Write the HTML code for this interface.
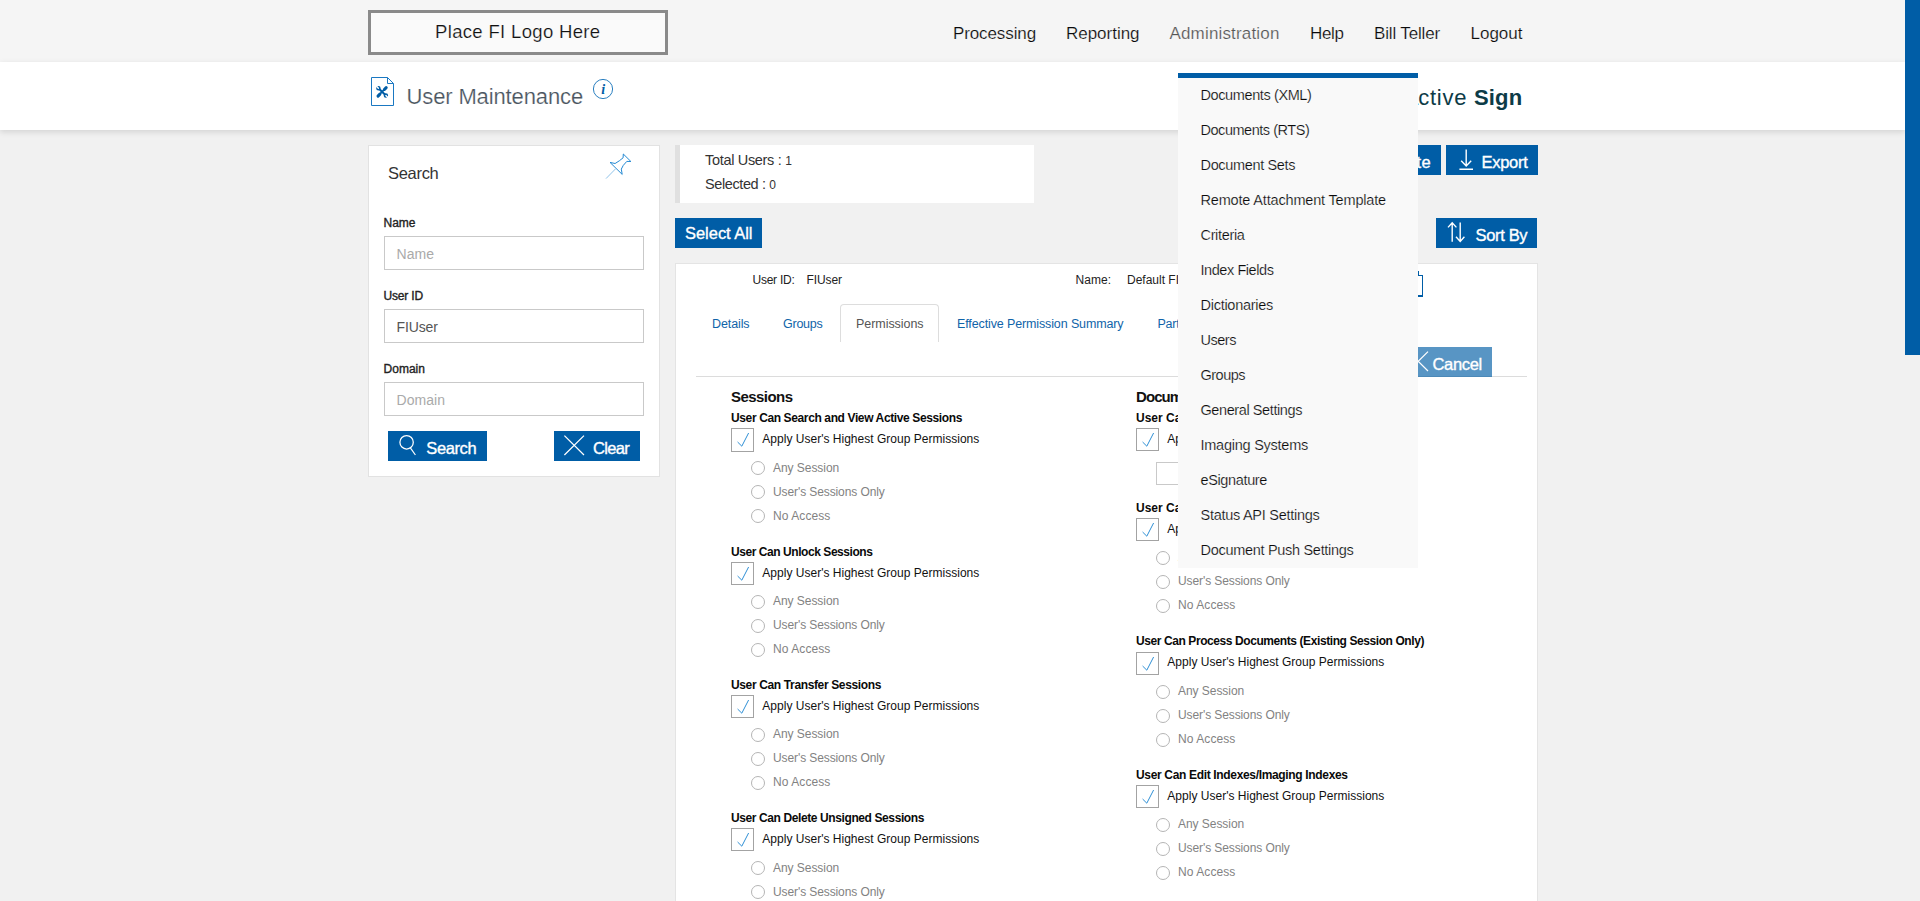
<!DOCTYPE html>
<html lang="en">
<head>
<meta charset="utf-8">
<title>User Maintenance</title>
<style>
html,body{margin:0;padding:0}
body{width:1920px;height:901px;overflow:hidden;position:relative;background:#f1f1f1;font-family:"Liberation Sans", sans-serif;color:#222}
.b{position:absolute;display:block;margin:0;padding:0;box-sizing:border-box}
.t{position:absolute;display:block;margin:0;padding:0;line-height:1;white-space:nowrap;font-weight:400;text-decoration:none;list-style:none}
h1.t,h2.t{font-weight:400}
b{font-weight:700}
small{font-size:12px}
nav,section{display:contents}
.logo{border:3px solid #8a8a8a;background:#fafafa;box-sizing:border-box}
.titlebar{background:#fff;box-shadow:0 2px 6px rgba(0,0,0,.13)}
.panel{background:#fff;box-shadow:inset 0 0 0 1px #e2e2e2}
.input{background:#fff;border:1px solid #c9c9c9}
.btn{background:#005da6;border:0;font-family:inherit;cursor:pointer;overflow:visible}
.btn.dis{opacity:.65}
.stats{background:#fff;border-left:5px solid #e0e0e0}
.card{background:#fff;box-shadow:inset 0 0 0 1px #e4e4e4;overflow:hidden}
.chk{border:1px solid #a3a3a3;background:#fff}
.chk svg{position:absolute;left:-1px;top:-1px}
.radio{border:1px solid #b5b5b5;border-radius:50%;background:#fff}
.menu{background:#f9f9f9;border-top:5px solid #005da6;list-style:none;overflow:hidden}
#t1{letter-spacing:0.339px}
#t2{letter-spacing:-0.111px}
#t3{letter-spacing:-0.024px}
#t4{letter-spacing:0.163px}
#t5{letter-spacing:-0.367px}
#t6{letter-spacing:-0.156px}
#t7{letter-spacing:0.000px}
#t8{letter-spacing:-0.128px}
#t10{letter-spacing:0.730px}
#t11{letter-spacing:0.157px}
#t12{letter-spacing:-0.297px}
#t13{letter-spacing:-0.004px}
#t14{letter-spacing:0.035px}
#t15{letter-spacing:-0.167px}
#t16{letter-spacing:-0.117px}
#t17{letter-spacing:0.023px}
#t18{letter-spacing:0.042px}
#t19{letter-spacing:-0.397px}
#t20{letter-spacing:-0.647px}
#t21{letter-spacing:-0.320px}
#t22{letter-spacing:-0.392px}
#t23{letter-spacing:-0.037px}
#t24{letter-spacing:0.383px}
#t25{letter-spacing:-0.281px}
#t26{letter-spacing:-0.330px}
#t27{letter-spacing:-0.252px}
#t28{letter-spacing:-0.083px}
#t29{letter-spacing:0.031px}
#t31{letter-spacing:-0.103px}
#t32{letter-spacing:-0.250px}
#t33{letter-spacing:-0.053px}
#t34{letter-spacing:-0.124px}
#t35{letter-spacing:-0.234px}
#t37{letter-spacing:-0.346px}
#t38{letter-spacing:-0.547px}
#t39{letter-spacing:-0.378px}
#t40{letter-spacing:0.016px}
#t41{letter-spacing:-0.046px}
#t42{letter-spacing:-0.099px}
#t43{letter-spacing:0.077px}
#t44{letter-spacing:-0.440px}
#t45{letter-spacing:0.016px}
#t46{letter-spacing:-0.046px}
#t47{letter-spacing:-0.099px}
#t48{letter-spacing:0.077px}
#t49{letter-spacing:-0.362px}
#t50{letter-spacing:0.016px}
#t51{letter-spacing:-0.046px}
#t52{letter-spacing:-0.099px}
#t53{letter-spacing:0.077px}
#t54{letter-spacing:-0.396px}
#t55{letter-spacing:0.016px}
#t56{letter-spacing:-0.046px}
#t57{letter-spacing:-0.099px}
#t58{letter-spacing:0.077px}
#t59{letter-spacing:-0.910px}
#t61{letter-spacing:0.016px}
#t63{letter-spacing:0.016px}
#t64{letter-spacing:-0.046px}
#t65{letter-spacing:-0.099px}
#t66{letter-spacing:0.077px}
#t67{letter-spacing:-0.415px}
#t68{letter-spacing:0.016px}
#t69{letter-spacing:-0.046px}
#t70{letter-spacing:-0.099px}
#t71{letter-spacing:0.077px}
#t72{letter-spacing:-0.335px}
#t73{letter-spacing:0.016px}
#t74{letter-spacing:-0.046px}
#t75{letter-spacing:-0.099px}
#t76{letter-spacing:0.077px}
#t77{letter-spacing:-0.390px}
#t78{letter-spacing:-0.464px}
#t79{letter-spacing:-0.342px}
#t80{letter-spacing:-0.171px}
#t81{letter-spacing:-0.342px}
#t82{letter-spacing:-0.432px}
#t83{letter-spacing:-0.271px}
#t84{letter-spacing:-0.475px}
#t85{letter-spacing:-0.510px}
#t86{letter-spacing:-0.407px}
#t87{letter-spacing:-0.248px}
#t88{letter-spacing:-0.364px}
#t89{letter-spacing:-0.271px}
#t90{letter-spacing:-0.300px}
</style>
</head>
<body>
<header class="b" style="left:0px;top:0px;width:1905px;height:62px;background:#f5f5f5;"><div class="logo b" style="left:368px;top:10px;width:300px;height:45px;"><span id="t1" class="t" style="left:64.00px;top:10px;font-size:18.5px;-webkit-text-stroke:.2px #fafafa;color:#111;">Place FI Logo Here</span></div><nav><a id="t2" class="t" style="left:953.00px;top:25px;font-size:17px;-webkit-text-stroke:.2px #f5f5f5;color:#0a0a0a;">Processing</a><a id="t3" class="t" style="left:1066.00px;top:25px;font-size:17px;-webkit-text-stroke:.2px #f5f5f5;color:#0a0a0a;">Reporting</a><a id="t4" class="t" style="left:1169.50px;top:25px;font-size:17px;-webkit-text-stroke:.2px #f5f5f5;color:#555;">Administration</a><a id="t5" class="t" style="left:1310.00px;top:25px;font-size:17px;-webkit-text-stroke:.2px #f5f5f5;color:#0a0a0a;">Help</a><a id="t6" class="t" style="left:1374.00px;top:25px;font-size:17px;-webkit-text-stroke:.2px #f5f5f5;color:#0a0a0a;">Bill Teller</a><a id="t7" class="t" style="left:1470.50px;top:25px;font-size:17px;-webkit-text-stroke:.2px #f5f5f5;color:#0a0a0a;">Logout</a></nav></header>
<div class="b titlebar" style="left:0px;top:62px;width:1905px;height:68px;"><svg class="b" style="left:368px;top:13px" width="30" height="34" viewBox="0 0 30 34"><path d="M3.5 2.5 H19.5 L25.5 8.5 V30.5 H3.5 Z" fill="#fff" stroke="#1a78c2" stroke-width="1"/><path d="M19.5 2.5 V8.5 H25.5" fill="none" stroke="#1a78c2" stroke-width="1"/><g stroke="#005da6" fill="none"><path d="M11 13.8 L17.4 20" stroke-width="2.1"/><circle cx="10.4" cy="13.2" r="1.5" stroke-width="1.5"/><circle cx="17.9" cy="20.5" r="1.5" stroke-width="1.5"/><path d="M16.6 14.2 L11.6 19.4" stroke-width="1.7"/><path d="M18.2 12.6 L16.4 14.5 M10 21.1 L11.9 19.1" stroke-width="3" stroke-linecap="round"/></g><path d="M10.2 13 L8 10.8 M18.1 20.7 L20.4 23" stroke="#fff" stroke-width="1.3"/></svg><h1 id="t8" class="t" style="left:406.50px;top:24px;font-size:22px;-webkit-text-stroke:.2px #fff;color:#4a5560;">User Maintenance</h1><svg class="b" style="left:591px;top:15px" width="24" height="24" viewBox="0 0 24 24"><circle cx="12" cy="12" r="9.6" fill="#fff" stroke="#2a7fc0" stroke-width="1"/><text x="12.3" y="17" text-anchor="middle" font-family="Liberation Serif, serif" font-style="italic" font-weight="700" font-size="14" fill="#005da6">i</text></svg><div class="b" style="left:1300px;top:0px;width:240px;height:68px;"><span id="t9" class="t" style="left:50.00px;top:25px;font-size:22px;color:#0d3b47;left:auto;right:121.7px;">Intera</span><span id="t10" class="t" style="left:118.30px;top:25px;font-size:22px;color:#0d3b47;">ctive</span><b id="t11" class="t" style="left:174.00px;top:25px;font-size:22px;font-weight:700;color:#0d3b47;">Sign</b></div></div>
<aside class="b panel" style="left:368px;top:145px;width:292px;height:332px;"><h2 id="t12" class="t" style="left:20.00px;top:20px;font-size:16.5px;color:#333;">Search</h2><svg class="b" style="left:236px;top:7px" width="28" height="28" viewBox="0 0 28 28"><path d="M19.3 2 L26.9 9.5 L22.8 9.4 Q18.5 13.5 17.3 17.1 L18.2 22.4 L6 10.4 L11.1 11.5 Q15.5 9 19.1 5.8 Z" fill="#fff" stroke="#2389d3" stroke-width="1" stroke-linejoin="miter"/><path d="M11.6 16.8 L2 26.6" stroke="#8fc3ea" stroke-width="1"/></svg><label id="t13" class="t" style="left:15.50px;top:72px;font-size:12px;-webkit-text-stroke:.35px;">Name</label><div class="b input" style="left:16px;top:91px;width:260px;height:34px;"><span id="t14" class="t" style="left:11.50px;top:10px;font-size:14px;color:#aaa;">Name</span></div><label id="t15" class="t" style="left:15.50px;top:145px;font-size:12px;-webkit-text-stroke:.35px;">User ID</label><div class="b input" style="left:16px;top:164px;width:260px;height:34px;"><span id="t16" class="t" style="left:11.50px;top:10px;font-size:14px;color:#555;">FIUser</span></div><label id="t17" class="t" style="left:15.50px;top:218px;font-size:12px;-webkit-text-stroke:.35px;">Domain</label><div class="b input" style="left:16px;top:237px;width:260px;height:34px;"><span id="t18" class="t" style="left:11.50px;top:10px;font-size:14px;color:#aaa;">Domain</span></div><button class="b btn" style="left:20px;top:286px;width:99px;height:30px;"><svg class="b" style="left:7px;top:2px" width="26" height="26" viewBox="0 0 26 26"><circle cx="11.6" cy="9.3" r="6.7" fill="none" stroke="#fff" stroke-width="1.25"/><path d="M15.4 14.8 L20.4 22" stroke="#fff" stroke-width="1.15"/></svg><span id="t19" class="t" style="left:38.30px;top:9px;font-size:16.5px;-webkit-text-stroke:.35px;color:#fff;">Search</span></button><button class="b btn" style="left:186px;top:286px;width:86px;height:30px;"><svg class="b" style="left:8px;top:2px" width="26" height="26" viewBox="0 0 26 26"><path d="M2.4 2.6 L22 22 M22 2.6 L2.4 22" stroke="#fff" stroke-width="1.25"/></svg><span id="t20" class="t" style="left:39.00px;top:9px;font-size:16.5px;-webkit-text-stroke:.35px;color:#fff;">Clear</span></button></aside>
<div class="b stats" style="left:675px;top:145px;width:359px;height:58px;"><div id="t21" class="t" style="left:25.00px;top:8px;font-size:14.5px;color:#333;">Total Users : <small>1</small></div><div id="t22" class="t" style="left:25.00px;top:32px;font-size:14.5px;color:#333;">Selected : <small>0</small></div></div>
<button class="b btn" style="left:675px;top:218px;width:87px;height:30px;"><span id="t23" class="t" style="left:10.00px;top:7px;font-size:16.5px;-webkit-text-stroke:.35px;color:#fff;">Select All</span></button>
<button class="b btn" style="left:1352px;top:145px;width:89px;height:30px;"><span id="t24" class="t" style="left:29.00px;top:9px;font-size:16.5px;-webkit-text-stroke:.35px;color:#fff;">Delete</span></button>
<button class="b btn" style="left:1446px;top:145px;width:92px;height:30px;"><svg class="b" style="left:10px;top:2px" width="22" height="26" viewBox="0 0 22 26"><path d="M10.2 2.6 V18.6 M5.2 13.8 L10.2 19 L15.2 13.8 M3.4 22.2 H17" fill="none" stroke="#fff" stroke-width="1.4"/></svg><span id="t25" class="t" style="left:35.50px;top:9px;font-size:16.5px;-webkit-text-stroke:.35px;color:#fff;">Export</span></button>
<button class="b btn" style="left:1436px;top:218px;width:101px;height:30px;"><svg class="b" style="left:8px;top:2px" width="26" height="26" viewBox="0 0 26 26"><path d="M8.2 21.8 V3 M4 7.4 L8.2 2.8 L12.4 7.4 M16.2 2.4 V21.2 M12 16.8 L16.2 21.4 L20.4 16.8" fill="none" stroke="#fff" stroke-width="1.4"/></svg><span id="t26" class="t" style="left:39.50px;top:9px;font-size:16.5px;-webkit-text-stroke:.35px;color:#fff;">Sort By</span></button>
<main class="b card" style="left:675px;top:263px;width:863px;height:660px;"><span id="t27" class="t" style="left:77.50px;top:11px;font-size:12px;">User ID:</span><span id="t28" class="t" style="left:131.50px;top:11px;font-size:12px;">FIUser</span><span id="t29" class="t" style="left:400.50px;top:11px;font-size:12px;">Name:</span><span id="t30" class="t" style="left:452.00px;top:11px;font-size:12px;">Default FI User</span><div class="b" style="left:726px;top:12px;width:22px;height:22px;border:1px solid #005da6;border-bottom-width:2px;box-sizing:border-box;background:#fff;"></div><div class="b" style="left:743px;top:8px;width:1px;height:4px;background:#005da6;"></div><nav><div class="b" style="left:165px;top:41px;width:99px;height:38px;border:1px solid #ddd;border-bottom:0;border-radius:4px 4px 0 0;box-sizing:border-box;background:#fff;"></div><a id="t31" class="t" style="left:37.00px;top:55px;font-size:12.5px;color:#1064a9;">Details</a><a id="t32" class="t" style="left:108.00px;top:55px;font-size:12.5px;color:#1064a9;">Groups</a><a id="t33" class="t" style="left:181.00px;top:55px;font-size:12.5px;color:#555;">Permissions</a><a id="t34" class="t" style="left:282.00px;top:55px;font-size:12.5px;color:#1064a9;">Effective Permission Summary</a><a id="t35" class="t" style="left:482.50px;top:55px;font-size:12.5px;color:#1064a9;">Part</a></nav><div class="b" style="left:21px;top:113px;width:831px;height:1px;background:#dcdcdc;"></div><button class="b btn dis" style="left:625px;top:84px;width:80px;height:30px;"><span id="t36" class="t" style="left:35.00px;top:9px;font-size:16.5px;-webkit-text-stroke:.35px;color:#fff;">Save</span></button><button class="b btn dis" style="left:723px;top:84px;width:94px;height:30px;"><svg class="b" style="left:8px;top:2px" width="26" height="26" viewBox="0 0 26 26"><path d="M2.4 2.6 L22 22 M22 2.6 L2.4 22" stroke="#fff" stroke-width="1.25"/></svg><span id="t37" class="t" style="left:34.50px;top:9px;font-size:16.5px;-webkit-text-stroke:.35px;color:#fff;">Cancel</span></button><h3 id="t38" class="t" style="left:56.00px;top:126px;font-size:15px;font-weight:700;color:#111;">Sessions</h3><section><h4 id="t39" class="t" style="left:56.00px;top:149px;font-size:12px;font-weight:700;color:#0a0a0a;">User Can Search and View Active Sessions</h4><label class="b chk" style="left:56px;top:165px;width:23px;height:24px;"><svg width="23" height="23" viewBox="0 0 23 23"><path d="M6.6 14 L10.8 18.2 L17.6 5" fill="none" stroke="#2389d3" stroke-width=".95"/></svg></label><span id="t40" class="t" style="left:87.30px;top:170px;font-size:12px;color:#111;">Apply User's Highest Group Permissions</span><i class="b radio" style="left:76px;top:198px;width:14px;height:14px;"></i><span id="t41" class="t" style="left:98.00px;top:199px;font-size:12px;color:#828282;">Any Session</span><i class="b radio" style="left:76px;top:222px;width:14px;height:14px;"></i><span id="t42" class="t" style="left:98.00px;top:223px;font-size:12px;color:#828282;">User's Sessions Only</span><i class="b radio" style="left:76px;top:246px;width:14px;height:14px;"></i><span id="t43" class="t" style="left:98.00px;top:247px;font-size:12px;color:#828282;">No Access</span></section><section><h4 id="t44" class="t" style="left:56.00px;top:283px;font-size:12px;font-weight:700;color:#0a0a0a;">User Can Unlock Sessions</h4><label class="b chk" style="left:56px;top:299px;width:23px;height:23px;"><svg width="23" height="23" viewBox="0 0 23 23"><path d="M6.6 14 L10.8 18.2 L17.6 5" fill="none" stroke="#2389d3" stroke-width=".95"/></svg></label><span id="t45" class="t" style="left:87.30px;top:304px;font-size:12px;color:#111;">Apply User's Highest Group Permissions</span><i class="b radio" style="left:76px;top:332px;width:14px;height:14px;"></i><span id="t46" class="t" style="left:98.00px;top:332px;font-size:12px;color:#828282;">Any Session</span><i class="b radio" style="left:76px;top:356px;width:14px;height:14px;"></i><span id="t47" class="t" style="left:98.00px;top:356px;font-size:12px;color:#828282;">User's Sessions Only</span><i class="b radio" style="left:76px;top:380px;width:14px;height:14px;"></i><span id="t48" class="t" style="left:98.00px;top:380px;font-size:12px;color:#828282;">No Access</span></section><section><h4 id="t49" class="t" style="left:56.00px;top:416px;font-size:12px;font-weight:700;color:#0a0a0a;">User Can Transfer Sessions</h4><label class="b chk" style="left:56px;top:432px;width:23px;height:23px;"><svg width="23" height="23" viewBox="0 0 23 23"><path d="M6.6 14 L10.8 18.2 L17.6 5" fill="none" stroke="#2389d3" stroke-width=".95"/></svg></label><span id="t50" class="t" style="left:87.30px;top:437px;font-size:12px;color:#111;">Apply User's Highest Group Permissions</span><i class="b radio" style="left:76px;top:464.5px;width:14px;height:14px;"></i><span id="t51" class="t" style="left:98.00px;top:465px;font-size:12px;color:#828282;">Any Session</span><i class="b radio" style="left:76px;top:488.5px;width:14px;height:14px;"></i><span id="t52" class="t" style="left:98.00px;top:489px;font-size:12px;color:#828282;">User's Sessions Only</span><i class="b radio" style="left:76px;top:512.5px;width:14px;height:14px;"></i><span id="t53" class="t" style="left:98.00px;top:513px;font-size:12px;color:#828282;">No Access</span></section><section><h4 id="t54" class="t" style="left:56.00px;top:549px;font-size:12px;font-weight:700;color:#0a0a0a;">User Can Delete Unsigned Sessions</h4><label class="b chk" style="left:56px;top:565px;width:23px;height:23px;"><svg width="23" height="23" viewBox="0 0 23 23"><path d="M6.6 14 L10.8 18.2 L17.6 5" fill="none" stroke="#2389d3" stroke-width=".95"/></svg></label><span id="t55" class="t" style="left:87.30px;top:570px;font-size:12px;color:#111;">Apply User's Highest Group Permissions</span><i class="b radio" style="left:76px;top:598px;width:14px;height:14px;"></i><span id="t56" class="t" style="left:98.00px;top:599px;font-size:12px;color:#828282;">Any Session</span><i class="b radio" style="left:76px;top:622px;width:14px;height:14px;"></i><span id="t57" class="t" style="left:98.00px;top:623px;font-size:12px;color:#828282;">User's Sessions Only</span><i class="b radio" style="left:76px;top:646px;width:14px;height:14px;"></i><span id="t58" class="t" style="left:98.00px;top:647px;font-size:12px;color:#828282;">No Access</span></section><h3 id="t59" class="t" style="left:461.00px;top:126px;font-size:15px;font-weight:700;color:#111;">Documents</h3><section><h4 id="t60" class="t" style="left:461.00px;top:149px;font-size:12px;font-weight:700;color:#0a0a0a;">User Can Add Documents</h4><label class="b chk" style="left:461px;top:165px;width:23px;height:23px;"><svg width="23" height="23" viewBox="0 0 23 23"><path d="M6.6 14 L10.8 18.2 L17.6 5" fill="none" stroke="#2389d3" stroke-width=".95"/></svg></label><span id="t61" class="t" style="left:492.30px;top:170px;font-size:12px;color:#111;">Apply User's Highest Group Permissions</span></section><div class="b input" style="left:481px;top:199px;width:200px;height:23px;"></div><section><h4 id="t62" class="t" style="left:461.00px;top:239px;font-size:12px;font-weight:700;color:#0a0a0a;">User Can View Documents</h4><label class="b chk" style="left:461px;top:255px;width:23px;height:23px;"><svg width="23" height="23" viewBox="0 0 23 23"><path d="M6.6 14 L10.8 18.2 L17.6 5" fill="none" stroke="#2389d3" stroke-width=".95"/></svg></label><span id="t63" class="t" style="left:492.30px;top:260px;font-size:12px;color:#111;">Apply User's Highest Group Permissions</span><i class="b radio" style="left:481px;top:288px;width:14px;height:14px;"></i><span id="t64" class="t" style="left:503.00px;top:288px;font-size:12px;color:#828282;">Any Session</span><i class="b radio" style="left:481px;top:312px;width:14px;height:14px;"></i><span id="t65" class="t" style="left:503.00px;top:312px;font-size:12px;color:#828282;">User's Sessions Only</span><i class="b radio" style="left:481px;top:336px;width:14px;height:14px;"></i><span id="t66" class="t" style="left:503.00px;top:336px;font-size:12px;color:#828282;">No Access</span></section><section><h4 id="t67" class="t" style="left:461.00px;top:372px;font-size:12px;font-weight:700;color:#0a0a0a;">User Can Process Documents (Existing Session Only)</h4><label class="b chk" style="left:461px;top:388.5px;width:23px;height:23px;"><svg width="23" height="23" viewBox="0 0 23 23"><path d="M6.6 14 L10.8 18.2 L17.6 5" fill="none" stroke="#2389d3" stroke-width=".95"/></svg></label><span id="t68" class="t" style="left:492.30px;top:393px;font-size:12px;color:#111;">Apply User's Highest Group Permissions</span><i class="b radio" style="left:481px;top:422px;width:14px;height:14px;"></i><span id="t69" class="t" style="left:503.00px;top:422px;font-size:12px;color:#828282;">Any Session</span><i class="b radio" style="left:481px;top:446px;width:14px;height:14px;"></i><span id="t70" class="t" style="left:503.00px;top:446px;font-size:12px;color:#828282;">User's Sessions Only</span><i class="b radio" style="left:481px;top:470px;width:14px;height:14px;"></i><span id="t71" class="t" style="left:503.00px;top:470px;font-size:12px;color:#828282;">No Access</span></section><section><h4 id="t72" class="t" style="left:461.00px;top:506px;font-size:12px;font-weight:700;color:#0a0a0a;">User Can Edit Indexes/Imaging Indexes</h4><label class="b chk" style="left:461px;top:522px;width:23px;height:23px;"><svg width="23" height="23" viewBox="0 0 23 23"><path d="M6.6 14 L10.8 18.2 L17.6 5" fill="none" stroke="#2389d3" stroke-width=".95"/></svg></label><span id="t73" class="t" style="left:492.30px;top:527px;font-size:12px;color:#111;">Apply User's Highest Group Permissions</span><i class="b radio" style="left:481px;top:555px;width:14px;height:14px;"></i><span id="t74" class="t" style="left:503.00px;top:555px;font-size:12px;color:#828282;">Any Session</span><i class="b radio" style="left:481px;top:579px;width:14px;height:14px;"></i><span id="t75" class="t" style="left:503.00px;top:579px;font-size:12px;color:#828282;">User's Sessions Only</span><i class="b radio" style="left:481px;top:603px;width:14px;height:14px;"></i><span id="t76" class="t" style="left:503.00px;top:603px;font-size:12px;color:#828282;">No Access</span></section></main>
<ul class="b menu" style="left:1178px;top:73px;width:240px;height:495px;"><li id="t77" class="t" style="left:22.50px;top:10px;font-size:14.5px;-webkit-text-stroke:.2px #f9f9f9;color:#0a0a0a;">Documents (XML)</li><li id="t78" class="t" style="left:22.50px;top:45px;font-size:14.5px;-webkit-text-stroke:.2px #f9f9f9;color:#0a0a0a;">Documents (RTS)</li><li id="t79" class="t" style="left:22.50px;top:80px;font-size:14.5px;-webkit-text-stroke:.2px #f9f9f9;color:#0a0a0a;">Document Sets</li><li id="t80" class="t" style="left:22.50px;top:115px;font-size:14.5px;-webkit-text-stroke:.2px #f9f9f9;color:#0a0a0a;">Remote Attachment Template</li><li id="t81" class="t" style="left:22.50px;top:150px;font-size:14.5px;-webkit-text-stroke:.2px #f9f9f9;color:#0a0a0a;">Criteria</li><li id="t82" class="t" style="left:22.50px;top:185px;font-size:14.5px;-webkit-text-stroke:.2px #f9f9f9;color:#0a0a0a;">Index Fields</li><li id="t83" class="t" style="left:22.50px;top:220px;font-size:14.5px;-webkit-text-stroke:.2px #f9f9f9;color:#0a0a0a;">Dictionaries</li><li id="t84" class="t" style="left:22.50px;top:255px;font-size:14.5px;-webkit-text-stroke:.2px #f9f9f9;color:#0a0a0a;">Users</li><li id="t85" class="t" style="left:22.50px;top:290px;font-size:14.5px;-webkit-text-stroke:.2px #f9f9f9;color:#0a0a0a;">Groups</li><li id="t86" class="t" style="left:22.50px;top:325px;font-size:14.5px;-webkit-text-stroke:.2px #f9f9f9;color:#0a0a0a;">General Settings</li><li id="t87" class="t" style="left:22.50px;top:360px;font-size:14.5px;-webkit-text-stroke:.2px #f9f9f9;color:#0a0a0a;">Imaging Systems</li><li id="t88" class="t" style="left:22.50px;top:395px;font-size:14.5px;-webkit-text-stroke:.2px #f9f9f9;color:#0a0a0a;">eSignature</li><li id="t89" class="t" style="left:22.50px;top:430px;font-size:14.5px;-webkit-text-stroke:.2px #f9f9f9;color:#0a0a0a;">Status API Settings</li><li id="t90" class="t" style="left:22.50px;top:465px;font-size:14.5px;-webkit-text-stroke:.2px #f9f9f9;color:#0a0a0a;">Document Push Settings</li></ul>
<div class="b" style="left:1905px;top:0px;width:15px;height:901px;background:#f1f1f1;"><div class="b" style="left:0px;top:0px;width:15px;height:355px;background:#005da6;"></div></div>
</body>
</html>
